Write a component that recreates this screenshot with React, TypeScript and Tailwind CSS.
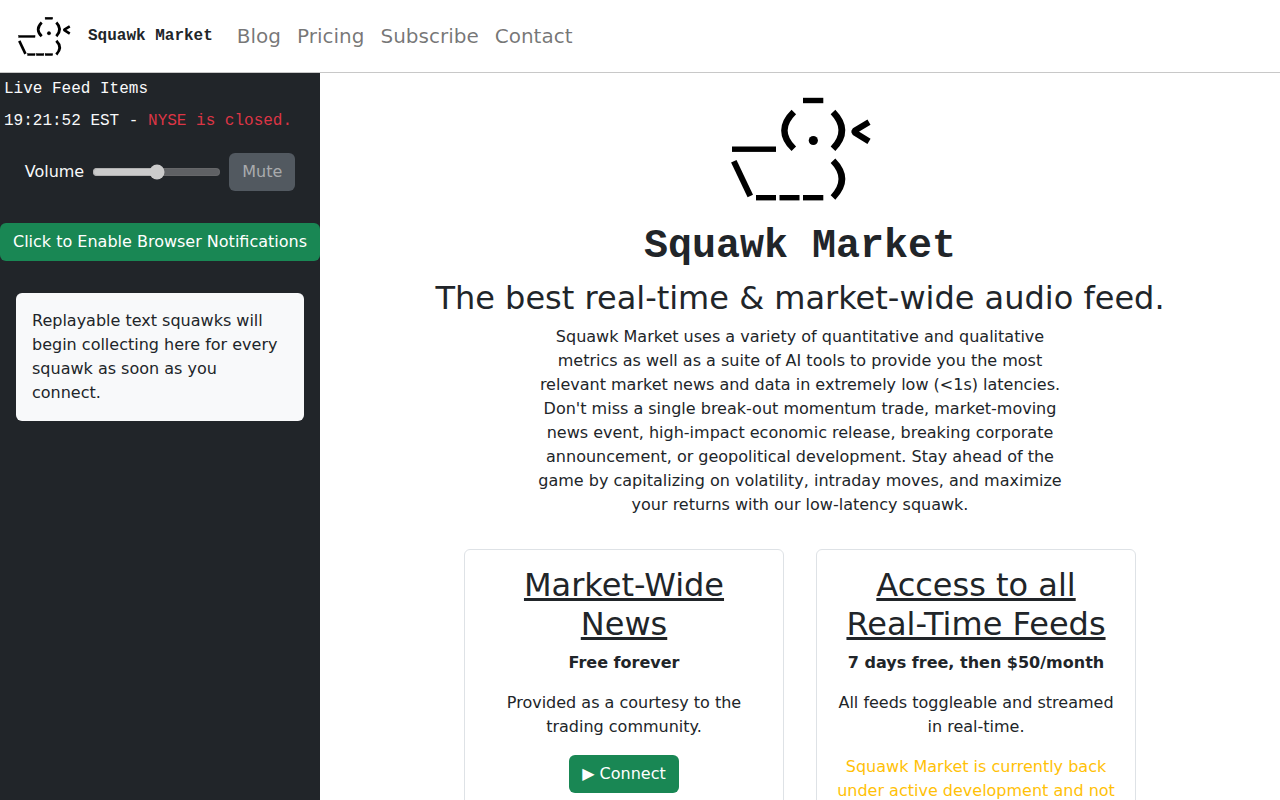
import React, { useState } from "react";

const navLinks = ["Blog", "Pricing", "Subscribe", "Contact"];

// heavy thickens the strokes so the duck stays readable at small sizes
function DuckLogo({ className, heavy = false }: { className?: string; heavy?: boolean }) {
  return (
    <svg viewBox="0 0 170 150" className={className} role="img" aria-label="Squawk Market logo">
      <g fill="#000" stroke="#000" strokeWidth={heavy ? 1 : 0}>
        <rect x="88" y="24.8" width="20.3" height="5.4" />
        <rect x="17" y="73.5" width="44" height="5.4" />
        <rect x="41" y="122" width="20" height="5.4" />
        <rect x="64.5" y="122" width="20" height="5.4" />
        <rect x="88" y="122" width="20.3" height="5.4" />
        <circle cx="98.3" cy="67.5" r="4.6" />
      </g>
      <g fill="none" stroke="#000" strokeWidth={heavy ? 7.4 : 6.5}>
        <path d="M78.8 39Q60 57.4 78.8 75.8" />
        <path d="M118 39Q135.8 57.4 118 75.8" />
        <path d="M118 87.8Q135.8 106 118 124.4" />
      </g>
      <g fill="none" stroke="#000" strokeWidth={heavy ? 7 : 6}>
        <path d="M18.8 88.2L35.3 123" />
        <path d="M154 49.2L139.4 57.8V59.4L154 68.4" strokeLinejoin="bevel" />
      </g>
    </svg>
  );
}

function Navbar() {
  return (
    <nav className="flex items-center px-3 py-2 bg-white border-b border-[#c8c8c8]">
      <a href="#" className="flex items-center gap-3 mr-4 font-['Liberation_Mono',monospace] font-bold">
        <DuckLogo className="w-16 h-14" heavy />
        Squawk Market
      </a>
      <ul className="flex">
        {navLinks.map((link) => (
          <li key={link}>
            <a href="#" className="block p-2 text-xl leading-[30px] text-black/55 hover:text-black/70">
              {link}
            </a>
          </li>
        ))}
      </ul>
    </nav>
  );
}

function Sidebar() {
  const [volume, setVolume] = useState(50);

  return (
    <aside className="w-80 shrink-0 overflow-y-auto [scrollbar-width:none] bg-[#212529] text-[#f8f9fa]">
      <div className="font-['Liberation_Mono',monospace]">
        <p className="p-1">Live Feed Items</p>
        <p className="p-1">
          19:21:52 EST - <span className="text-[#dc3545]">NYSE is closed.</span>
        </p>
      </div>

      <div className="flex items-center justify-center gap-2 my-4">
        <label htmlFor="volume">Volume</label>
        <input
          id="volume"
          type="range"
          min="0"
          max="100"
          value={volume}
          onChange={(e) => setVolume(Number(e.target.value))}
          disabled
          className="w-[129px]"
        />
        <button disabled className="px-[13px] py-[7px] rounded-md bg-[#525960] text-[#a9abad]">
          Mute
        </button>
      </div>

      <button className="w-full mt-4 py-[7px] rounded-md bg-[#198754] text-white whitespace-nowrap">
        Click to Enable Browser Notifications
      </button>

      <div className="mx-4 mt-8 p-4 rounded-md bg-[#f8f9fa] text-[#212529]">
        Replayable text squawks will begin collecting here for every squawk as soon as you connect.
      </div>
    </aside>
  );
}

function PlanCard({ title, price, children }: { title: string; price: string; children: React.ReactNode }) {
  return (
    <section className="w-80 p-4 rounded-md border border-[#dee2e6]">
      <h2 className="mb-[7px] text-[32px] leading-[39px] underline">{title}</h2>
      <p className="mb-4 font-bold">{price}</p>
      {children}
    </section>
  );
}

export default function App() {
  return (
    <div className="flex flex-col h-screen bg-white text-base text-[#212529] font-['DejaVu_Sans',sans-serif]">
      <Navbar />
      <div className="flex flex-1 min-h-0">
        <Sidebar />
        <main className="flex-1 overflow-y-auto [scrollbar-width:none] text-center">
          <DuckLogo className="mx-auto w-[170px] h-[150px]" />
          <h1 className="mb-2 text-[40px] leading-[48px] font-bold font-['Liberation_Mono',monospace]">
            Squawk Market
          </h1>
          <h2 className="mb-[7px] text-[32px] leading-[39px]">The best real-time &amp; market-wide audio feed.</h2>
          <p className="mx-auto max-w-[528px]">
            Squawk Market uses a variety of quantitative and qualitative metrics as well as a suite of AI tools to
            provide you the most relevant market news and data in extremely low (&lt;1s) latencies. Don't miss a
            single break-out momentum trade, market-moving news event, high-impact economic release, breaking
            corporate announcement, or geopolitical development. Stay ahead of the game by capitalizing on
            volatility, intraday moves, and maximize your returns with our low-latency squawk.
          </p>

          <div className="flex flex-wrap justify-center gap-8 my-8">
            <PlanCard title="Market-Wide News" price="Free forever">
              <p className="mb-4">Provided as a courtesy to the trading community.</p>
              <button className="px-[13px] py-[7px] rounded-md bg-[#198754] text-white">▶ Connect</button>
            </PlanCard>
            <PlanCard title="Access to all Real-Time Feeds" price="7 days free, then $50/month">
              <p className="mb-4">All feeds toggleable and streamed in real-time.</p>
              <p className="mb-4 text-[#ffc107]">Squawk Market is currently back under active development and not</p>
            </PlanCard>
          </div>
        </main>
      </div>
    </div>
  );
}
